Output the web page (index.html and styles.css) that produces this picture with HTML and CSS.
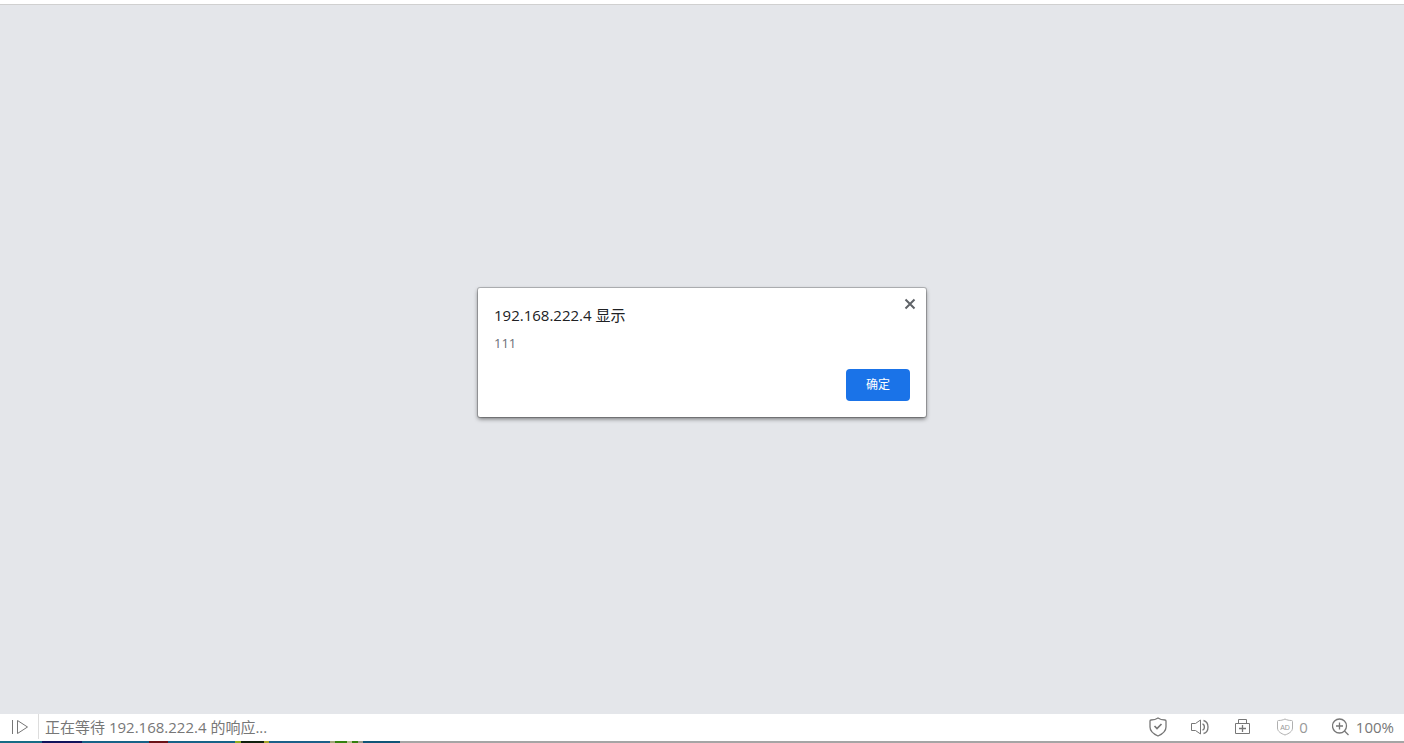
FILE: index.html
```html
<!DOCTYPE html>
<html lang="zh-CN">
<head>
    <meta charset="UTF-8">
    <meta name="viewport" content="width=device-width, initial-scale=1.0">
    <title>192.168.222.4</title>

    <link rel="stylesheet" href="styles.css">

</head>
<body>

    <main class="page">

        <div class="dialog" role="alertdialog" aria-labelledby="dialog-title" aria-describedby="dialog-text">
            <button class="dialog-close" type="button" aria-label="关闭">
                <svg width="12" height="12" viewBox="0 0 12 12"><path d="M1.5 1.5L10.5 10.5M10.5 1.5L1.5 10.5"/></svg>
            </button>
            <h1 class="dialog-title" id="dialog-title">192.168.222.4 显示</h1>
            <p class="dialog-text" id="dialog-text">111</p>
            <div class="dialog-buttons">
                <button class="btn-ok" type="button">确定</button>
            </div>
        </div>

    </main>

    <footer class="statusbar">

        <button class="tool toggle" type="button" aria-label="展开">
            <svg width="18" height="16" viewBox="0 0 18 16"><path d="M2.5 1V15M7.5 1.5V14.5L17.5 8Z"/></svg>
        </button>

        <p class="status-text">正在等待 192.168.222.4 的响应...</p>

        <div class="tools">
            <button class="tool" type="button" aria-label="安全">
                <svg width="18" height="20" viewBox="0 0 18 20"><path class="bold" d="M9 1C7 2.5 4 3 2 3Q1 3 1 4V10C1 14.5 4.500 17 9 19C13.500 17 17 14.500 17 10V4Q17 3 16 3C14 3 11 2.500 9 1Z"/><path class="thick" d="M5.500 9L8 11.500L12.500 7"/></svg>
            </button>
            <button class="tool" type="button" aria-label="声音">
                <svg width="20" height="16" viewBox="0 0 20 16"><path d="M0.500 4.500H4.500L9.500 1V15L4.500 11.500H0.500Z"/><path class="bold" d="M11.500 5C14 5.500 14 10.500 11.500 11M12.500 1.500C18.500 3 18.500 13 12.500 14.500"/></svg>
            </button>
            <button class="tool" type="button" aria-label="工具箱">
                <svg width="18" height="16" viewBox="0 0 18 16"><path d="M0.500 4.500H14.500V14.500H0.500ZM3.500 4.500V0.500H11.500V4.500"/><path class="bold" d="M7.500 6V13M4 9.500H11"/></svg>
            </button>
            <button class="tool ad" type="button" aria-label="广告拦截 0">
                <svg width="16" height="18" viewBox="0 0 16 18"><path d="M8 1C6 2 4 2.500 1.500 2.500Q0.500 2.500 0.500 3.500V10C0.500 13.500 4 15.500 8 17C12 15.500 15.500 13.500 15.500 10V3.500Q15.500 2.500 14.500 2.500C12 2.500 10 2 8 1Z"/><text x="8" y="12" text-anchor="middle">AD</text></svg>
                <span>0</span>
            </button>
            <button class="tool" type="button" aria-label="缩放 100%">
                <svg width="18" height="18" viewBox="0 0 18 18"><circle class="bold" cx="7.500" cy="8" r="7"/><path class="bold" d="M12.500 13L16.500 17"/><path class="bold" d="M7.500 4.500V11.500M4 8H11"/></svg>
                <span>100%</span>
            </button>
        </div>

    </footer>

    <div class="desktop"></div>

</body>
</html>
```

FILE: styles.css
```css
*
{
    margin: 0;
    padding: 0;
    box-sizing: border-box;
}

body
{
    display: flex;
    flex-direction: column;
    min-height: 100vh;
    background: white;
    font-family: "Open Sans", "Noto Sans CJK SC", sans-serif;
    font-size: 15px;
    line-height: 20px;
    color: #777777;
}

button
{
    border: none;
    background: none;
    font: inherit;
    color: inherit;
    cursor: pointer;
}

svg
{
    display: block;
    fill: none;
    stroke: currentColor;
}

.page
{
    flex: 1;
    display: flex;
    align-items: center;
    justify-content: center;
    margin-top: 4px;
    border-top: 1px solid #d0d0d0;
    padding-bottom: 14px;
    background: #e4e6ea;
}

.dialog
{
    position: relative;
    width: 448px;
    max-width: 100%;
    padding: 16px;
    background: white;
    border-radius: 2px;
    box-shadow: 0 0 0 1px rgb(0 0 0 / 20%), 0 2px 4px rgb(0 0 0 / 50%);
}

.dialog-close
{
    position: absolute;
    top: 10px;
    right: 10px;
    color: #5f6368;
}

.dialog-close svg
{
    stroke-width: 2;
}

.dialog-title
{
    font-size: 15px;
    font-weight: 400;
    line-height: 22px;
    color: #202124;
}

.dialog-text
{
    margin-top: 8px;
    font-size: 13px;
    line-height: 18px;
    color: #6b6f78;
}

.dialog-buttons
{
    display: flex;
    justify-content: flex-end;
    margin-top: 17px;
}

.btn-ok
{
    width: 64px;
    height: 32px;
    border-radius: 4px;
    background: #1a73e8;
    color: white;
    font-size: 12px;
    font-weight: 400;
}

.statusbar
{
    display: flex;
    align-items: center;
    height: 27px;
    padding-right: 10px;
    padding-bottom: 2px;
}

.toggle
{
    align-self: stretch;
    padding: 0 10px;
    border-right: 1px solid #dddddd;
}

.status-text
{
    flex: 1;
    padding-left: 6px;
}

.tools
{
    display: flex;
    align-items: center;
    gap: 24px;
}

.tool
{
    display: flex;
    align-items: center;
    gap: 6px;
}

.tool .bold
{
    stroke-width: 1.3;
}

.tool .thick
{
    stroke-width: 1.7;
}

.ad svg
{
    color: #b0b0b0;
}

.ad span
{
    color: #999999;
}

.ad text
{
    fill: #999999;
    stroke: none;
    font-family: "Liberation Sans", sans-serif;
    font-size: 7px;
}

/* strip of wallpaper that shows under the window */
.desktop
{
    height: 2px;
    background: linear-gradient(to right,
        #176b85 0 42px, #11145c 42px 82px, #176287 82px 149px,
        #6b1218 149px 168px, #176287 168px 235px, #91ad22 235px 241px,
        #11210f 241px 264px, #a5a52a 264px 269px, #1b6089 269px 330px,
        #a0a678 330px 335px, #35800f 335px 347px, #b7bd92 347px 352px,
        #35800f 352px 358px, #9a9b8b 358px 363px, #105578 363px 400px,
        #a5a5a5 400px);
}
```
